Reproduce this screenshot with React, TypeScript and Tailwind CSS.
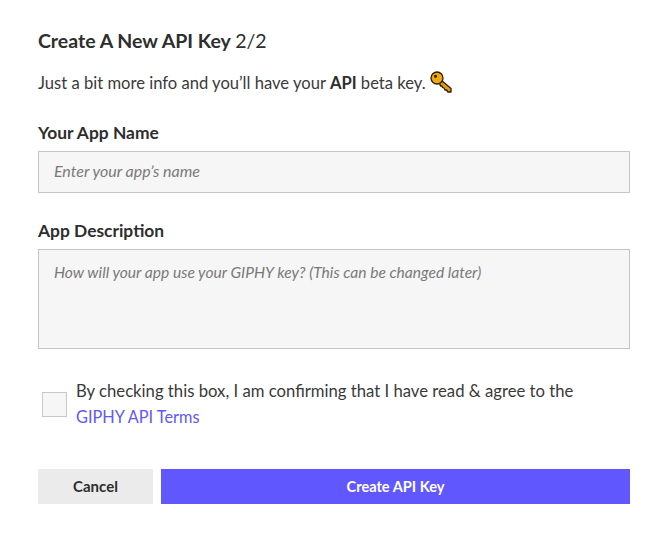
function KeyIcon() {
  return (
    <svg width="22" height="22" viewBox="0 0 22 22" className="ml-[4px] -mt-[2px] shrink-0">
      <path d="M9 10.5l2-1.5 10 8.5v3.5h-3l-1.5-2-1.5 0-1-2-1.500-.5-.5-1.500-1.500 0z" fill="#e59c0c" stroke="#2a1c00" strokeWidth="1.300" strokeLinejoin="round" />
      <circle cx="7" cy="7" r="6" fill="#f0a80f" stroke="#2a1c00" strokeWidth="1.300" />
      <circle cx="5.500" cy="5.200" r="1.500" fill="#2a1c00" />
    </svg>
  );
}

export default function App() {
  return (
    <div className="w-[665px] h-[540px] bg-white px-[38px] pr-[35px] pt-[29px] font-['Lato',sans-serif] text-[#2e2e2e]">
      <h1 className="text-[19.5px] leading-6 font-bold">
        Create A New API Key <span className="font-normal">2/2</span>
      </h1>
      <p className="mt-[18px] flex items-center h-6 text-[16.6px] text-[#3a3a3a]">
        <span>
          Just a bit more info and you’ll have your <b className="text-[#2e2e2e]">API</b> beta key.
        </span>
        <KeyIcon />
      </p>

      <label className="block mt-[26px] text-[17.4px] leading-6 font-bold">Your App Name</label>
      <input
        placeholder="Enter your app’s name"
        className="block mt-[6px] w-full h-[42px] px-[15px] pb-[3px] bg-[#f6f6f6] border border-[#c4c4c4] text-[16px] italic placeholder:text-[#7a7a7a] outline-none"
      />

      <label className="block mt-[26px] text-[17.4px] leading-6 font-bold">App Description</label>
      <textarea
        placeholder="How will your app use your GIPHY key? (This can be changed later)"
        className="block mt-[6px] w-full h-[100px] px-[15px] py-[12px] bg-[#f6f6f6] border border-[#c4c4c4] text-[15.6px] leading-5 italic placeholder:text-[#7a7a7a] outline-none resize-none"
      />

      <div className="flex items-center mt-[30px] pl-1">
        <div className="w-[25px] h-[25px] shrink-0 bg-[#f6f6f6] border border-[#c8c8c8]" />
        <p className="ml-[9px] text-[16.7px] leading-[25px] text-[#3a3a3a]">
          By checking this box, I am confirming that I have read &amp; agree to the
          <br />
          <a className="text-[16.3px] text-[#6157ff]">GIPHY API Terms</a>
        </p>
      </div>

      <div className="flex gap-2 mt-[39px]">
        <button className="w-[115px] h-[35px] bg-[#ebebeb] text-[15px] font-bold text-[#2e2e2e]">Cancel</button>
        <button className="flex-1 h-[35px] bg-[#6157ff] text-[14.6px] font-bold text-white">Create API Key</button>
      </div>
    </div>
  );
}
